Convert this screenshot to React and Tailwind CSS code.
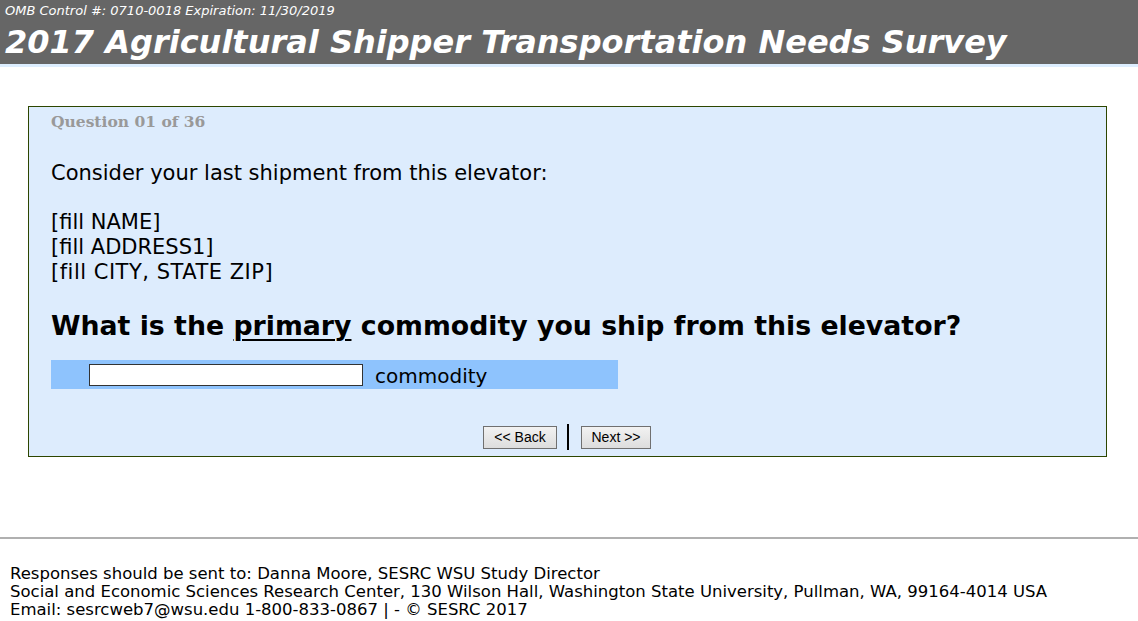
export default function App() {
  const sans = { fontFamily: '"DejaVu Sans", Verdana, sans-serif' };
  return (
    <div className="w-[1138px] h-[621px] bg-white relative overflow-hidden" style={sans}>
      <div className="h-[64px] bg-[#666666] pl-[5px] text-white">
        <div className="text-[13px] italic leading-[21px]">OMB Control #: 0710-0018 Expiration: 11/30/2019</div>
        <div className="text-[32px] font-bold italic leading-[42px]">2017 Agricultural Shipper Transportation Needs Survey</div>
      </div>
      <div className="h-[3px] bg-[#ddeeff]"></div>
      <div className="pt-[39px] pl-[28px]">
        <div className="w-[1079px] h-[351px] border border-[#2d4600] bg-[#ddecfd] pl-[22px] pt-[4px]">
          <div className="text-[15.5px] font-bold text-[#999999] leading-[22px]" style={{ fontFamily: '"DejaVu Serif", serif' }}>Question 01 of 36</div>
          <div className="mt-[28px] text-[21px] leading-[25px] text-black">Consider your last shipment from this elevator:</div>
          <div className="mt-[24px] text-[21px] leading-[25px] text-black">
            <div>[fill NAME]</div>
            <div>[fill ADDRESS1]</div>
            <div className="tracking-[0.5px]">[fill CITY, STATE ZIP]</div>
          </div>
          <div className="mt-[24px] text-[26.75px] font-bold leading-[34px] text-black">
            What is the <span className="underline underline-offset-[4px] decoration-[2px]">primary</span> commodity you ship from this elevator?
          </div>
          <div className="mt-[17px] w-[567px] h-[29px] bg-[#8ec3fd] flex items-center pl-[38px]">
            <div className="w-[274px] h-[22px] bg-white border border-[#333]"></div>
            <span className="ml-[12px] text-[20px] leading-[25px] text-black pt-[3px]">commodity</span>
          </div>
          <div className="mt-[35px] flex items-center pl-[432px]" style={{ fontFamily: '"Liberation Sans", Arial, sans-serif' }}>
            <button className="w-[74px] h-[23px] border border-[#707070] bg-gradient-to-b from-[#f2f2f2] to-[#dddddd] text-[14px] text-black">&lt;&lt; Back</button>
            <div className="w-[2px] h-[26px] bg-black ml-[10px] mr-[12px]"></div>
            <button className="w-[70px] h-[23px] border border-[#707070] bg-gradient-to-b from-[#f2f2f2] to-[#dddddd] text-[14px] text-black">Next &gt;&gt;</button>
          </div>
        </div>
      </div>
      <div className="absolute left-0 right-0 top-[537px] h-[2px] bg-[#b0b0b0]"></div>
      <div className="absolute left-[10px] top-[565px] text-[16.5px] leading-[18px] text-black">
        <div>Responses should be sent to: Danna Moore, SESRC WSU Study Director</div>
        <div>Social and Economic Sciences Research Center, 130 Wilson Hall, Washington State University, Pullman, WA, 99164-4014 USA</div>
        <div>Email: sesrcweb7@wsu.edu 1-800-833-0867 | - © SESRC 2017</div>
      </div>
    </div>
  );
}
